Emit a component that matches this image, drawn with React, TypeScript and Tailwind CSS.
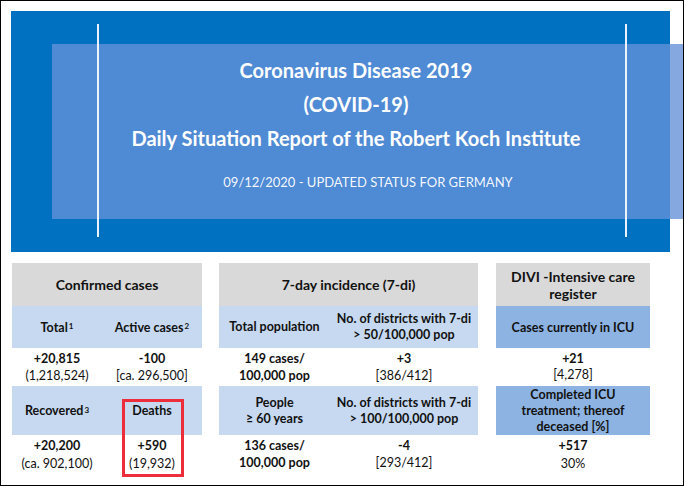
const FONT = "font-['Lato','Liberation_Sans',sans-serif]";

function Sup({ n }: { n: string }) {
  return <sup className="text-[8px] relative -top-[1px] ml-[1px]">{n}</sup>;
}

export default function App() {
  return (
    <div className={`relative w-[684px] h-[486px] border border-black bg-white overflow-hidden text-[#111] ${FONT}`}>
      {/* Banner */}
      <div className="relative ml-[10px] mt-[10px] w-[659px] h-[241px] bg-[#0070c0]">
        <div className="absolute left-[41px] top-[33px] w-[640px] h-[175px] bg-[rgba(100,144,217,0.79)] text-white">
          <div className="flex flex-col items-center pt-[9px] pr-[32px] text-[20px] font-bold leading-[34px]">
            <p>Coronavirus Disease 2019</p>
            <p>(COVID-19)</p>
            <p>Daily Situation Report of the Robert Koch Institute</p>
          </div>
          <p className="mt-[17px] pr-[8px] text-center text-[13px] leading-[20px] text-white/95">
            09/12/2020 - UPDATED STATUS FOR GERMANY
          </p>
        </div>
        <div className="absolute left-[86px] top-[13px] w-[2px] h-[213px] bg-white/90" />
        <div className="absolute left-[614px] top-[13px] w-[2px] h-[213px] bg-white/90" />
      </div>

      {/* Tables */}
      <div className="flex ml-[11px] mt-[11px] text-[12.5px] leading-[17px]">
        {/* Confirmed cases */}
        <div className="relative w-[190px]">
          <div className="h-[43px] bg-[#d9d9d9] flex items-center justify-center text-[14px] font-bold">
            Confirmed cases
          </div>
          <div className="flex h-[42px] bg-[#c6d9f0] font-bold">
            <div className="w-[90px] flex items-center justify-center">Total<Sup n="1" /></div>
            <div className="flex-1 flex items-center justify-center">Active cases<Sup n="2" /></div>
          </div>
          <div className="flex h-[38px]">
            <div className="w-[90px] flex flex-col items-center justify-center">
              <span className="font-bold">+20,815</span>
              <span>(1,218,524)</span>
            </div>
            <div className="flex-1 flex flex-col items-center justify-center">
              <span className="font-bold">-100</span>
              <span>[ca. 296,500]</span>
            </div>
          </div>
          <div className="flex h-[49px] bg-[#c6d9f0] font-bold">
            <div className="w-[90px] flex items-center justify-center">Recovered<Sup n="3" /></div>
            <div className="flex-1 flex items-center justify-center">Deaths</div>
          </div>
          <div className="flex pt-[2px] leading-[18px]">
            <div className="w-[90px] flex flex-col items-center">
              <span className="font-bold">+20,200</span>
              <span>(ca. 902,100)</span>
            </div>
            <div className="flex-1 flex flex-col items-center">
              <span className="font-bold">+590</span>
              <span>(19,932)</span>
            </div>
          </div>
          <div className="absolute left-[110px] top-[136px] w-[62px] h-[78px] border-[3px] border-[#ee2d3a]" />
        </div>

        {/* 7-day incidence */}
        <div className="ml-[17px] w-[259px]">
          <div className="h-[43px] bg-[#d9d9d9] flex items-center justify-center text-[14px] font-bold">
            7-day incidence (7-di)
          </div>
          <div className="flex h-[42px] bg-[#c6d9f0] font-bold leading-[16px]">
            <div className="w-[111px] flex items-center justify-center">Total population</div>
            <div className="flex-1 flex flex-col items-center justify-center text-center">
              <span>No. of districts with 7-di</span>
              <span>&gt; 50/100,000 pop</span>
            </div>
          </div>
          <div className="flex h-[38px]">
            <div className="w-[111px] flex flex-col items-center justify-center font-bold">
              <span>149 cases/</span>
              <span>100,000 pop</span>
            </div>
            <div className="flex-1 flex flex-col items-center justify-center">
              <span className="font-bold">+3</span>
              <span>[386/412]</span>
            </div>
          </div>
          <div className="flex h-[49px] bg-[#c6d9f0] font-bold leading-[16px]">
            <div className="w-[111px] flex flex-col items-center justify-center">
              <span>People</span>
              <span>≥ 60 years</span>
            </div>
            <div className="flex-1 flex flex-col items-center justify-center">
              <span>No. of districts with 7-di</span>
              <span>&gt; 100/100,000 pop</span>
            </div>
          </div>
          <div className="flex pt-[2px] leading-[17px]">
            <div className="w-[111px] flex flex-col items-center font-bold">
              <span>136 cases/</span>
              <span>100,000 pop</span>
            </div>
            <div className="flex-1 flex flex-col items-center">
              <span className="font-bold">-4</span>
              <span>[293/412]</span>
            </div>
          </div>
        </div>

        {/* DIVI */}
        <div className="ml-[18px] w-[154px]">
          <div className="h-[43px] bg-[#d9d9d9] flex flex-col items-center justify-center text-[14px] font-bold leading-[17px]">
            <span>DIVI -Intensive care</span>
            <span>register</span>
          </div>
          <div className="h-[42px] bg-[#8db3e2] flex items-center justify-center font-bold">
            Cases currently in ICU
          </div>
          <div className="h-[38px] flex flex-col items-center justify-center leading-[16px]">
            <span className="font-bold">+21</span>
            <span>[4,278]</span>
          </div>
          <div className="h-[49px] bg-[#8db3e2] flex flex-col items-center justify-center font-bold leading-[16px]">
            <span>Completed ICU</span>
            <span>treatment; thereof</span>
            <span>deceased [%]</span>
          </div>
          <div className="flex flex-col items-center pt-[2px] leading-[18px]">
            <span className="font-bold">+517</span>
            <span>30%</span>
          </div>
        </div>
      </div>
    </div>
  );
}
